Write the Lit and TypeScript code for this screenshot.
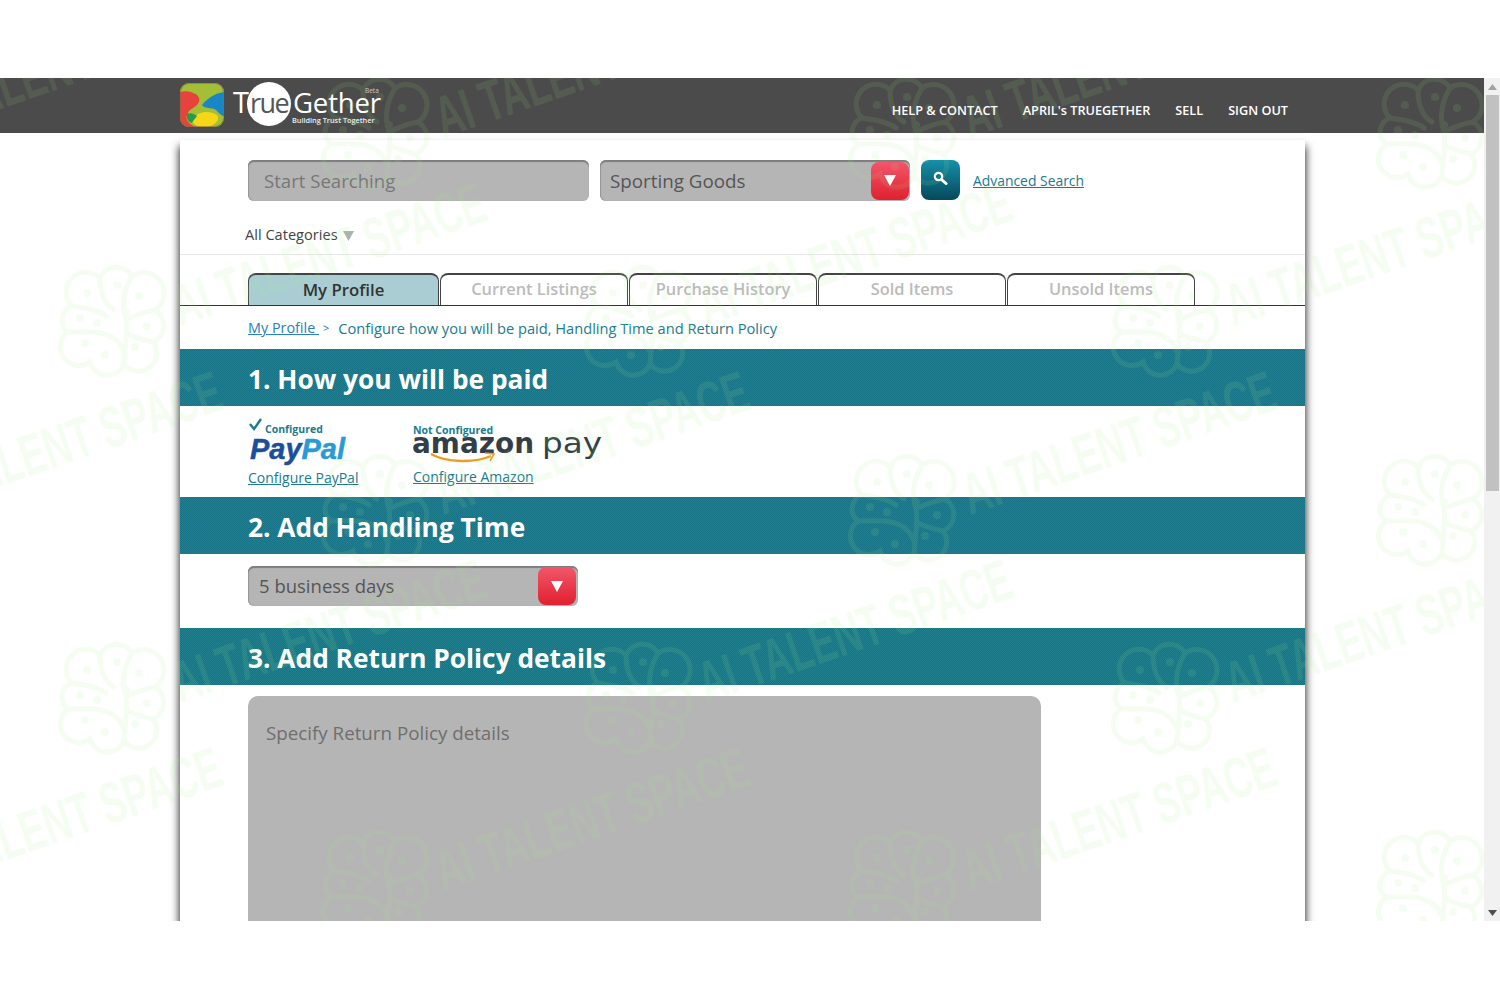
import { LitElement, html, css, svg } from "lit";
import { customElement } from "lit/decorators.js";

const FLOWERS: [number, number][] = [];
for (const y of [130, 507, 883]) for (const x of [-152, 375, 902, 1430]) FLOWERS.push([x, y - 78]);
for (const y of [-58, 318, 695]) for (const x of [112, 638, 1165]) FLOWERS.push([x, y - 78]);

const flower = svg`<g fill="none" stroke-width="5" stroke-linecap="round">
  <path d="M-40,-12 A18,18 0 0 1 -12,-40 A18,18 0 0 1 20,-42 A18,18 0 0 1 43,-8 A18,18 0 0 1 41,24 A18,18 0 0 1 12,46 A18,18 0 0 1 -22,44 A18,18 0 0 1 -44,14 A15,15 0 0 1 -40,-12" />
  <path d="M-12,-40 C-12,-25 -8,-14 2,-8 M20,-42 C10,-25 10,-10 14,2 C16,12 14,22 12,46 M43,-8 C30,-6 22,-2 14,2 M-44,14 C-28,14 -14,12 -2,18 C6,22 10,28 12,34 M-40,-12 C-26,-10 -14,-8 -6,-2 M41,24 C32,22 24,20 16,16" />
  <g fill="currentColor" stroke="none">
    <circle cx="-25" cy="-25" r="4"/><circle cx="5" cy="-33" r="4"/><circle cx="27" cy="-22" r="4"/>
    <circle cx="-32" cy="0" r="4"/><circle cx="14" cy="-5" r="4"/><circle cx="35" cy="8" r="4"/>
    <circle cx="-15" cy="5" r="4"/><circle cx="-27" cy="25" r="4"/><circle cx="-7" cy="37" r="4"/><circle cx="23" cy="29" r="4"/>
  </g></g>`;

const chevron = html`<span class="drop"><svg width="12" height="11" viewBox="0 0 12 11"><path d="M0,0H12L6,11Z" fill="#fff"/></svg></span>`;

@customElement("app-root")
export class AppRoot extends LitElement {
  static styles = css`
    :host { display: block; font-family: "Open Sans", "Noto Sans", sans-serif; background: #fff; height: 1000px; overflow: hidden; }
    .frame { margin-top: 78px; position: absolute; top: 0; left: 0; width: 1500px; height: 843px; display: flex; overflow: hidden; }
    .viewport { position: relative; width: 1484px; height: 843px; overflow: hidden; background: #fff; flex: none; }
    .scrollbar { width: 16px; flex: none; background: #f1f1f1; display: flex; flex-direction: column; align-items: center; }
    .arrow { height: 17px; flex: none; display: flex; align-items: center; justify-content: center; }
    .thumb { width: 13px; height: 396px; background: #c1c1c1; flex: none; margin-left: 1px; }
    .track { flex: 1; }
    header { height: 55px; background: #4b4b4b; display: flex; justify-content: space-between; padding: 0 196px 0 180px; }
    .logo { display: block; }
    nav { display: flex; gap: 25px; align-items: center; padding-top: 8px; }
    nav a { color: #fff; font-size: 12.7px; font-weight: 600; white-space: nowrap; }
    .card { width: 1125px; margin: 7px 0 0 180px; background: #fff; box-shadow: 0 7px 8px 1px rgba(0,0,0,.8); height: 900px; }
    .search { display: flex; padding: 20px 0 0 68px; height: 41px; align-items: stretch; box-sizing: content-box; }
    .field { background: #b5b5b5; border-radius: 6px; box-shadow: inset 0 2px 1px #7d7d7d, inset 1px 0 1px #999; box-sizing: border-box; display: flex; align-items: center; justify-content: space-between; position: relative; }
    .q { width: 341px; padding: 0 0 1px 16px; font-size: 18.6px; color: #777; }
    .sel { width: 310px; margin-left: 11px; padding: 0 1px 0 10px; font-size: 18.8px; color: #555; }
    .drop { width: 38px; height: 38px; border-radius: 8px; background: linear-gradient(#f3566a, #e0202f); display: flex; align-items: center; justify-content: center; flex: none; }
    .go { width: 39px; height: 40px; margin-left: 11px; border-radius: 8px; background: linear-gradient(#1690a8, #07485c); display: flex; align-items: flex-start; justify-content: center; padding-top: 11px; box-sizing: border-box; }
    .adv { margin-left: 13px; align-self: center; font-size: 13.9px; font-weight: 500; color: #1a7a8e; text-decoration: underline; }
    .cats { box-sizing: border-box; padding: 13px 0 0 65px; display: flex; align-items: center; gap: 5px; font-size: 14.6px; color: #444; border-bottom: 1px solid #e8e8e8; height: 54px; line-height: 20px; }
    .cats svg { margin-top: 4px; }
    .tabs { padding: 18px 0 0 68px; display: flex; gap: 1px; border-bottom: 1px solid #333; height: 32px; box-sizing: content-box; }
    .tab { width: 188px; height: 32px; box-sizing: border-box; border: 1px solid #444; border-top-width: 2px; border-bottom: 0; border-radius: 8px 8px 0 0; text-align: center; line-height: 27px; font-size: 16.4px; font-weight: 600; color: #bbb; background: #fff; }
    .tab.active { width: 191px; background: #a9cdd3; color: #333; line-height: 29px; font-size: 16.8px; }
    .crumb { height: 43px; box-sizing: border-box; padding-left: 68px; display: flex; align-items: center; font-size: 14.65px; color: #1a7a8e; }
    .crumb a { color: #2a80b9; text-decoration: underline; white-space: pre; font-size: 14.4px; }
    .crumb i { font-style: normal; font-size: 11px; margin: 0 9px 0 4px; color: #1a7a8e; }
    .bar { height: 57px; box-sizing: border-box; padding: 3px 0 0 68px; display: flex; align-items: center; color: #fff; font-size: 26.3px; font-weight: 700;
      background-color: #1b7a8f; background-image: repeating-conic-gradient(#167285 0 25%, #23808f 0 50%); background-size: 2px 2px; }
    .pay { height: 91px; display: flex; padding-left: 68px; box-sizing: border-box; }
    .p1 { width: 165px; flex: none; }
    .pay a { color: #1a7a8e; text-decoration: underline; font-size: 14px; font-weight: 500; }
    .p1 svg, .p2 svg { display: block; }
    .p2 { flex: none; }
    .p2 a { position: relative; top: -1px; }
    .hand { height: 74px; padding: 12px 0 0 68px; box-sizing: border-box; }
    .hand .field { width: 330px; height: 40px; padding: 0 2px 0 11px; font-size: 18.5px; color: #555; line-height: 38px; }
    .ret { padding: 11px 0 0 68px; }
    .ta { width: 793px; height: 300px; background: #b5b5b5; border-radius: 10px; padding: 24px 18px; box-sizing: border-box; font-size: 18.75px; color: #6f6f6f; }
    .wm { position: absolute; inset: 0; pointer-events: none; color: #a8f58a; opacity: .1; }
    .wm text { font-family: "Liberation Sans", sans-serif; font-weight: 700; font-size: 58px; fill: currentColor; }
    .wm path { stroke: currentColor; }
  `;

  render() {
    return html`
      <div class="frame">
        <div class="viewport">
          <header>
            <svg class="logo" width="205" height="55" viewBox="0 0 205 55">
              <defs><clipPath id="lg"><rect x="0" y="5" width="44" height="44" rx="9"/></clipPath></defs>
              <g clip-path="url(#lg)">
                <rect x="0" y="5" width="44" height="44" fill="#a3bf35"/>
                <path d="M0,14 C10,11 22,17 19,24 C16,30 10,30 8,35 C4,40 8,46 16,49 H0Z" fill="#e8423c"/>
                <path d="M44,14 C34,15 26,22 22,27 C24,31 32,29 36,32 C40,36 42,38 44,38Z" fill="#1b86c7"/>
                <path d="M13,41 C17,33 30,32 37,37 C41,43 33,49 24,49 C18,49 11,46 13,41Z" fill="#f7d517"/>
                <path d="M7,36 C10,34 15,36 17,38 C14,42 12,44 12,45 C8,44 6,40 7,36Z" fill="#2a9a4a"/>
              </g>
              <rect x=".5" y="5.5" width="43" height="43" rx="9" fill="none" stroke="#8a6a4a" stroke-opacity=".6"/>
              <circle cx="89" cy="26" r="22" fill="#fff"/>
              <text x="53" y="35" font-family="'Open Sans',sans-serif" font-size="29" fill="#fff">T</text>
              <text x="70" y="35" font-family="'Open Sans',sans-serif" font-size="27" letter-spacing="-1.5" fill="#555">rue</text>
              <text x="113" y="35" font-family="'Open Sans',sans-serif" font-size="27.6" letter-spacing="-.2" fill="#fff">Gether</text>
              <text x="185" y="15" font-family="'Open Sans',sans-serif" font-size="6.5" fill="#ccc">Beta</text>
              <text x="112" y="45" font-family="'Open Sans',sans-serif" font-size="7.3" font-weight="600" fill="#eee">Building Trust Together</text>
            </svg>
            <nav><a>HELP &amp; CONTACT</a><a>APRIL's TRUEGETHER</a><a>SELL</a><a>SIGN OUT</a></nav>
          </header>
          <main class="card">
            <div class="search">
              <div class="field q">Start Searching</div>
              <div class="field sel">Sporting Goods ${chevron}</div>
              <div class="go"><svg width="15" height="15" viewBox="0 0 15 15"><circle cx="5.5" cy="5.5" r="3.7" fill="none" stroke="#fff" stroke-width="2.2"/><path d="M8.5,8.5 L13,12.5" stroke="#fff" stroke-width="3" stroke-linecap="round"/></svg></div>
              <a class="adv">Advanced Search</a>
            </div>
            <div class="cats">All Categories <svg width="11" height="10" viewBox="0 0 11 10"><path d="M0,0H11L5.5,10Z" fill="#a9b3ad"/></svg></div>
            <div class="tabs">
              <div class="tab active">My Profile</div>
              <div class="tab">Current Listings</div>
              <div class="tab">Purchase History</div>
              <div class="tab">Sold Items</div>
              <div class="tab">Unsold Items</div>
            </div>
            <div class="crumb"><a>My Profile </a><i>&gt;</i>Configure how you will be paid, Handling Time and Return Policy</div>
            <div class="bar">1. How you will be paid</div>
            <div class="pay">
              <div class="p1">
                <svg width="120" height="60" viewBox="0 0 120 60">
                  <path d="M2,18 L6,23 L13,13" fill="none" stroke="#1a7a8e" stroke-width="2.4"/>
                  <text x="17" y="27" font-family="'Open Sans',sans-serif" font-size="10.5" font-weight="700" fill="#1a7a8e">Configured</text>
                  <text x="2" y="53" font-family="'Liberation Sans',sans-serif" font-size="29" font-weight="700" font-style="italic" stroke-width=".5" textLength="95" lengthAdjust="spacingAndGlyphs"><tspan fill="#1b4f9c" stroke="#1b4f9c">Pay</tspan><tspan fill="#2a9ad6" stroke="#2a9ad6">Pal</tspan></text>
                </svg>
                <a>Configure PayPal</a>
              </div>
              <div class="p2">
                <svg width="195" height="60" viewBox="0 0 195 60">
                  <text x="0" y="28" font-family="'Open Sans',sans-serif" font-size="10.5" font-weight="700" fill="#1a7a8e">Not Configured</text>
                  <text x="-1" y="47" font-family="'DejaVu Sans',sans-serif" font-size="29" font-weight="700" fill="#333e48" textLength="122" lengthAdjust="spacingAndGlyphs">amazon</text>
                  <text x="129" y="47" font-family="'DejaVu Sans',sans-serif" font-size="29" fill="#333e48" textLength="60" lengthAdjust="spacingAndGlyphs">pay</text>
                  <path d="M18,48 C34,57 62,57 78,50" fill="none" stroke="#f29a1f" stroke-width="2.4"/>
                  <path d="M72,47 L81,48 L77,55" fill="none" stroke="#f29a1f" stroke-width="1.6"/>
                </svg>
                <a>Configure Amazon</a>
              </div>
            </div>
            <div class="bar">2. Add Handling Time</div>
            <div class="hand"><div class="field">5 business days ${chevron}</div></div>
            <div class="bar">3. Add Return Policy details</div>
            <div class="ret"><div class="ta">Specify Return Policy details</div></div>
          </main>
          <svg class="wm" width="1484" height="843" viewBox="0 0 1484 843">
            ${FLOWERS.map(([x, y]) => svg`<g transform="translate(${x} ${y})">${flower}
              <text transform="translate(68 8) rotate(-19)" textLength="328" lengthAdjust="spacingAndGlyphs">AI TALENT SPACE</text></g>`)}
          </svg>
        </div>
        <div class="scrollbar">
          <div class="arrow"><svg width="9" height="6" viewBox="0 0 9 6"><path d="M0,6H9L4.5,0Z" fill="#a3a3a3"/></svg></div>
          <div class="thumb"></div>
          <div class="track"></div>
          <div class="arrow"><svg width="9" height="6" viewBox="0 0 9 6"><path d="M0,0H9L4.5,6Z" fill="#505050"/></svg></div>
        </div>
      </div>
    `;
  }
}
